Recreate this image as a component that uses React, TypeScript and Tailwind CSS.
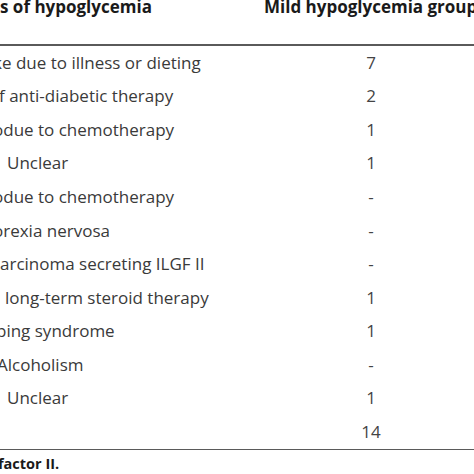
const rows: { text: string; ml: string; n: string }[] = [
  { text: "ke due to illness or dieting", ml: "ml-[-7px]", n: "7" },
  { text: "f anti-diabetic therapy", ml: "ml-[-1px]", n: "2" },
  { text: "odue to chemotherapy", ml: "ml-[-7px]", n: "1" },
  { text: "Unclear", ml: "ml-[7px]", n: "1" },
  { text: "odue to chemotherapy", ml: "ml-[-7px]", n: "-" },
  { text: "orexia nervosa", ml: "ml-[-7px]", n: "-" },
  { text: "arcinoma secreting ILGF II", ml: "ml-[0px]", n: "-" },
  { text: "long-term steroid therapy", ml: "ml-[5px]", n: "1" },
  { text: "ping syndrome", ml: "ml-[-4px]", n: "1" },
  { text: "Alcoholism", ml: "ml-[-3px]", n: "-" },
  { text: "Unclear", ml: "ml-[7px]", n: "1" },
  { text: "", ml: "ml-[0px]", n: "14" },
];

export default function App() {
  return (
    <div className="w-[474px] h-[474px] overflow-hidden bg-white font-['Open_Sans',sans-serif] whitespace-nowrap">
      <div className="flex h-[44px] text-[17px] font-bold text-[#1a1a1a] leading-[20px]">
        <div className="w-[264px] shrink-0 -mt-[3px]">s of hypoglycemia</div>
        <div className="shrink-0 -mt-[3px]">Mild hypoglycemia group</div>
      </div>
      <div className="h-[1.5px] bg-[#5a5a5a]" />
      {rows.map((r, i) => (
        <div key={i} className="flex h-[33.6px] items-center text-[17px] text-[#3a3a3a]">
          <div className="w-[263px] shrink-0 overflow-hidden">
            <span className={r.ml + " block"}>{r.text}</span>
          </div>
          <div className="w-[216px] shrink-0 text-center text-[#444]">{r.n}</div>
        </div>
      ))}
      <div className="h-[1.5px] bg-[#5a5a5a]" />
      <div className="text-[14.5px] font-bold text-[#1a1a1a] pt-[4px] leading-[20px] ml-[-2px]">factor II.</div>
    </div>
  );
}
